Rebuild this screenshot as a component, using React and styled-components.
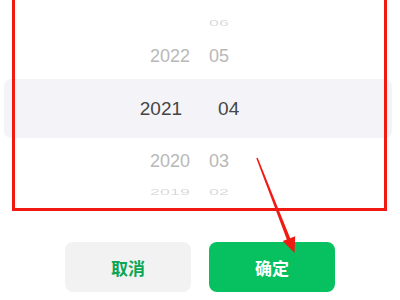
import React from "react";
import styled, { createGlobalStyle } from "styled-components";

const GlobalStyle = createGlobalStyle`
  html, body {
    margin: 0;
    padding: 0;
    background: #fff;
  }
  body {
    font-family: "Liberation Sans", "Noto Sans CJK SC", sans-serif;
  }
`;

const rows = [
  { year: "", month: "06", kind: "far", h: 32 },
  { year: "2022", month: "05", kind: "near", h: 34 },
  { year: "2021", month: "04", kind: "active", h: 59 },
  { year: "2020", month: "03", kind: "near", h: 34 },
  { year: "2019", month: "02", kind: "far", h: 28 },
];

function App() {
  return (
    <>
      <GlobalStyle />
      <Screen>
        <Picker>
          {rows.map((r, i) => (
            <Row key={i} $kind={r.kind} style={{ height: r.h }}>
              <Year>{r.year}</Year>
              <Month>{r.month}</Month>
            </Row>
          ))}
          <RedBox />
        </Picker>
        <Actions>
          <Button>取消</Button>
          <Button $primary>确定</Button>
        </Actions>
        <Arrow viewBox="0 0 400 300" width="400" height="300">
          <polygon
            points="256.3,158.3 257.7,157.7 290.6,239.2 287.2,240.6"
            fill="#f01a12"
          />
          <polygon points="294.5,253 295.2,236.2 282.8,241" fill="#f01a12" />
        </Arrow>
      </Screen>
    </>
  );
}

export default App;

const Screen = styled.div`
  position: relative;
  width: 400px;
  height: 300px;
  overflow: hidden;
  background: #fff;
`;

const Picker = styled.div`
  position: relative;
  display: flex;
  flex-direction: column;
  padding: 7px 8px 0 4px;
  height: 211px;
  box-sizing: border-box;
`;

const Row = styled.div`
  display: flex;
  justify-content: center;
  align-items: center;
  box-sizing: border-box;
  padding-right: 17px;
  gap: ${(p) => (p.$kind === "active" ? "36px" : "19px")};
  margin: ${(p) => (p.$kind === "active" ? "6px 0" : "0")};
  background: ${(p) => (p.$kind === "active" ? "#f4f4f8" : "transparent")};
  border-radius: 7px;
  font-size: ${(p) => (p.$kind === "active" ? "19px" : "18px")};
  color: ${(p) =>
    p.$kind === "active" ? "#454545" : p.$kind === "near" ? "#b8b8b8" : "#dadada"};
  transform: ${(p) => (p.$kind === "far" ? "scaleY(0.5)" : "none")};
  filter: ${(p) => (p.$kind === "far" ? "blur(0.4px)" : "none")};
`;

const Year = styled.span`
  min-width: 40px;
  text-align: right;
`;

const Month = styled.span`
  min-width: 20px;
  text-align: left;
`;

const RedBox = styled.div`
  position: absolute;
  left: 12px;
  top: -4px;
  width: 375px;
  height: 215px;
  box-sizing: border-box;
  border: 3px solid #f01a12;
  pointer-events: none;
`;

const Actions = styled.div`
  display: flex;
  justify-content: center;
  gap: 18px;
  padding-top: 31px;
`;

const Button = styled.button`
  width: 126px;
  height: 50px;
  border: none;
  border-radius: 8px;
  background: ${(p) => (p.$primary ? "#07c160" : "#f2f2f2")};
  color: ${(p) => (p.$primary ? "#fff" : "#0aa653")};
  font-family: "Noto Sans CJK SC", sans-serif;
  font-size: 17px;
  font-weight: 700;
  padding: 0;
`;

const Arrow = styled.svg`
  position: absolute;
  left: 0;
  top: 0;
  pointer-events: none;
`;
